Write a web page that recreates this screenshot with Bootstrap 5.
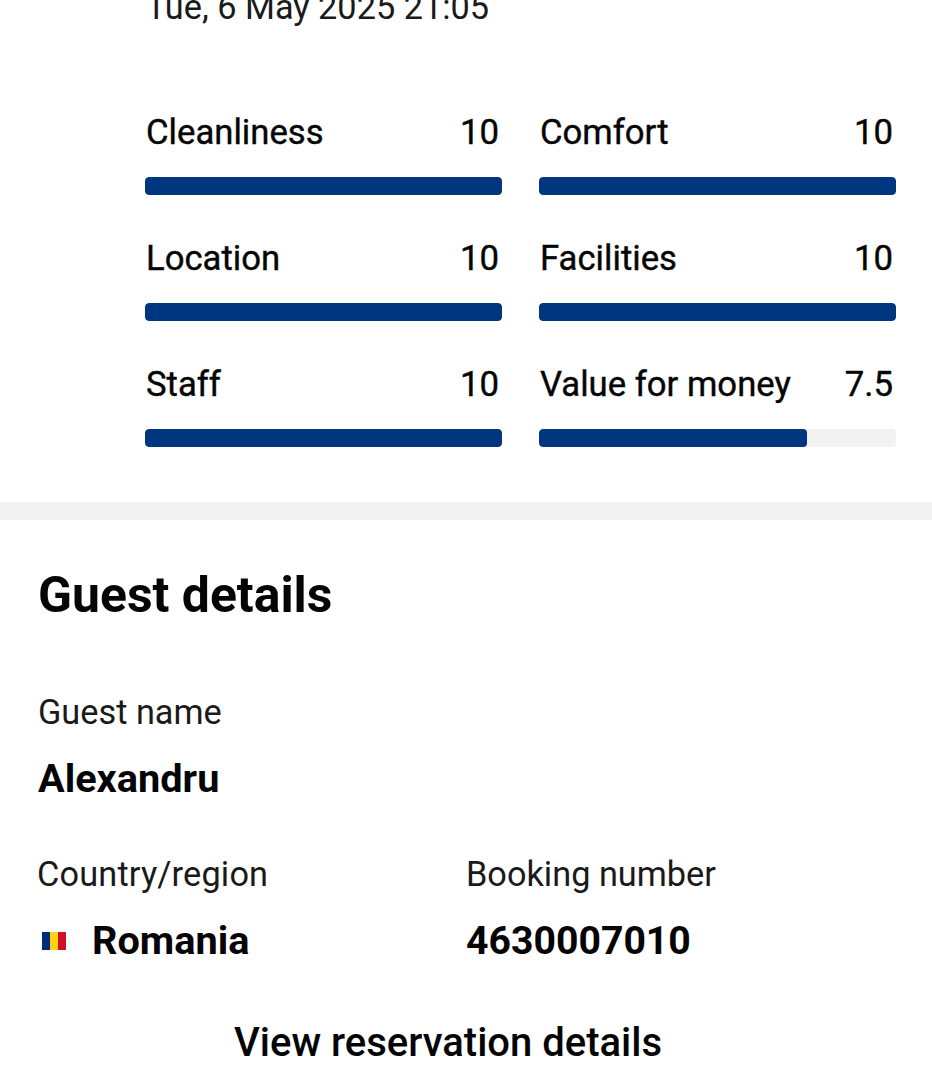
<!DOCTYPE html>
<html lang="en"><head><meta charset="utf-8">
<link href="https://cdn.jsdelivr.net/npm/bootstrap@5.3.0/dist/css/bootstrap.min.css" rel="stylesheet">
<style>
html,body{margin:0;height:1080px;overflow:hidden;background:#fff;}
body{font-family:Roboto,"Liberation Sans",sans-serif;color:#050505;}
.scrap{height:1080px;overflow:hidden;}
.datez{font-size:34.3px;line-height:36px;margin:-11px 0 0 146px;color:#1a1a1a;}
.scores{margin:86px 36px 0 145px;display:grid;grid-template-columns:357px 357px;column-gap:37px;row-gap:0;}
.scoreitem{height:126px;}
.scorehead{display:flex;justify-content:space-between;align-items:baseline;font-size:34.7px;line-height:42px;font-weight:400;-webkit-text-stroke:.4px #050505;height:40px;padding:0 3px 0 1px;margin-bottom:26px;}
.scorenum{font-size:34.8px;line-height:42px;}
.scoretrack{height:18px;background:#f2f2f2;border-radius:4px;overflow:hidden;}
.scorefill{height:18px;background:#003580;border-radius:4px;}
.sep{height:18px;background:#f2f2f2;margin-top:13px;}
.guesttitle{font-size:49.9px;line-height:56px;font-weight:700;margin:47px 0 0 38px;}
.lbl{font-size:34.3px;line-height:40px;color:#1a1a1a;}
.lblwide{letter-spacing:.17px;}
.val{font-size:39.7px;line-height:44px;font-weight:700;margin-top:25px;}
.valnum{font-size:39.2px;}
.gname{margin:69px 0 0 38px;}
.grow2{margin:53px 0 0 37px;display:grid;grid-template-columns:429px 1fr;}
.flagbox{width:24px;height:18px;display:inline-flex;margin:0 26px 0 5px;overflow:hidden;}
.flagbox span{flex:1;}
.viewlink{font-size:40px;line-height:44px;font-weight:500;text-align:center;margin:58px 0 0 -36px;}
</style></head><body>
<div class="scrap">
<div class="datez">Tue, 6 May 2025 21:05</div>
<div class="scores">
<div class="scoreitem"><div class="scorehead"><span>Cleanliness</span><span class="scorenum">10</span></div><div class="scoretrack"><div class="scorefill" style="width:100%"></div></div></div>
<div class="scoreitem"><div class="scorehead"><span>Comfort</span><span class="scorenum">10</span></div><div class="scoretrack"><div class="scorefill" style="width:100%"></div></div></div>
<div class="scoreitem"><div class="scorehead"><span>Location</span><span class="scorenum">10</span></div><div class="scoretrack"><div class="scorefill" style="width:100%"></div></div></div>
<div class="scoreitem"><div class="scorehead"><span>Facilities</span><span class="scorenum">10</span></div><div class="scoretrack"><div class="scorefill" style="width:100%"></div></div></div>
<div class="scoreitem"><div class="scorehead"><span>Staff</span><span class="scorenum">10</span></div><div class="scoretrack"><div class="scorefill" style="width:100%"></div></div></div>
<div class="scoreitem"><div class="scorehead"><span>Value for money</span><span class="scorenum">7.5</span></div><div class="scoretrack"><div class="scorefill" style="width:75%"></div></div></div>
</div>
<div class="sep"></div>
<div class="guesttitle">Guest details</div>
<div class="gname"><div class="lbl">Guest name</div><div class="val">Alexandru</div></div>
<div class="grow2">
<div><div class="lbl lblwide">Country/region</div><div class="val d-flex align-items-center"><span class="flagbox"><span style="background:#002b7f"></span><span style="background:#fcd116"></span><span style="background:#ce1126"></span></span>Romania</div></div>
<div><div class="lbl">Booking number</div><div class="val valnum">4630007010</div></div>
</div>
<div class="viewlink">View reservation details</div>
</div>
<script src="https://cdn.jsdelivr.net/npm/bootstrap@5.3.0/dist/js/bootstrap.bundle.min.js"></script>
</body></html>
